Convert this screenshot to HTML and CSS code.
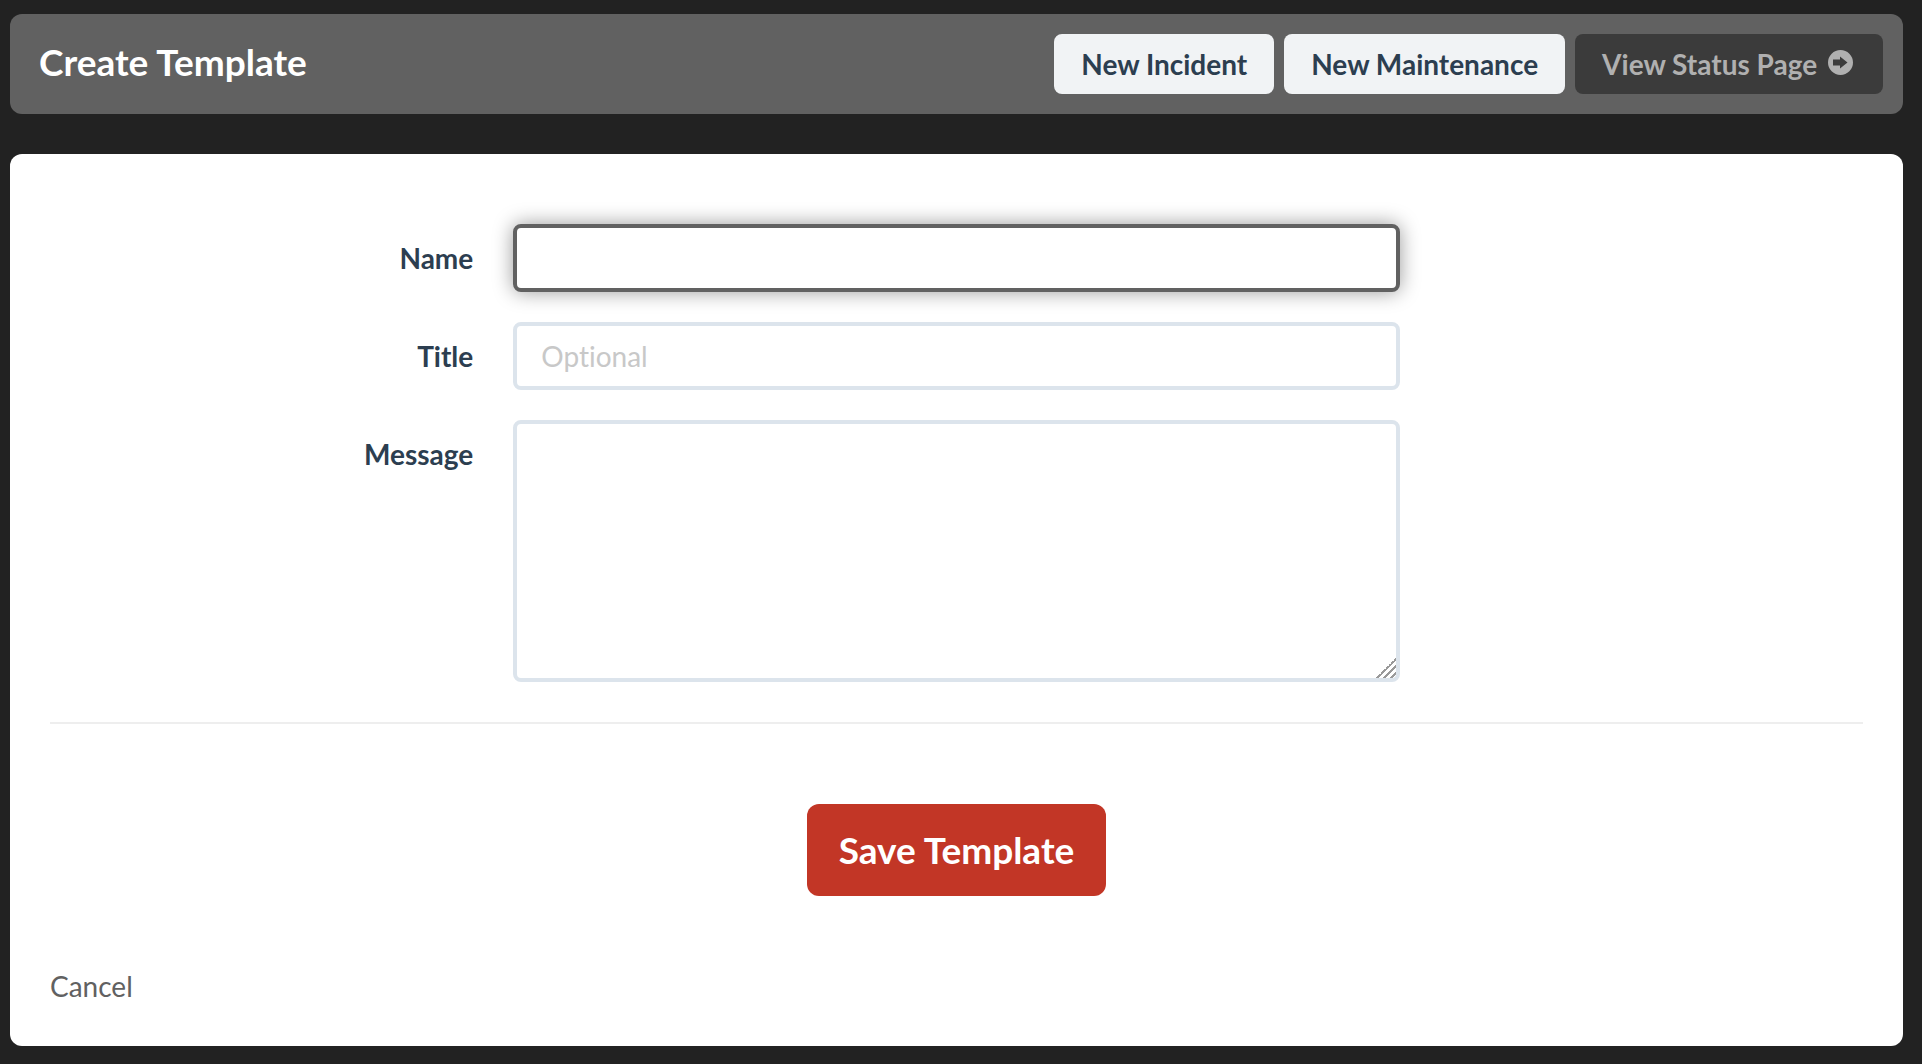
FILE: index.html
```html
<!DOCTYPE html>
<html lang="en">
<head>
  <meta charset="UTF-8">
  <title>Create Template</title>
  <link rel="stylesheet" href="styles.css">
</head>
<body>

  <header class="topbar">
    <h1>Create Template</h1>
    <nav class="actions">
      <a href="#" class="btn">New Incident</a>
      <a href="#" class="btn">New Maintenance</a>
      <a href="#" class="btn btn-dark">View Status Page
        <svg class="icon" viewBox="0 0 25 25" aria-hidden="true">
          <path fill="currentColor" fill-rule="evenodd" d="M12.500 0a12.500 12.500 0 1 1 0 25a12.500 12.500 0 1 1 0-25zM5 9.500v6h7v3l7.500-6L12 6.500v3z"/>
        </svg>
      </a>
    </nav>
  </header>

  <main class="panel">
    <form>
      <div class="form-row">
        <label for="name">Name</label>
        <input type="text" id="name" class="field" autofocus>
      </div>
      <div class="form-row">
        <label for="title">Title</label>
        <input type="text" id="title" class="field" placeholder="Optional">
      </div>
      <div class="form-row">
        <label for="message">Message</label>
        <textarea id="message" class="field"></textarea>
      </div>
      <hr>
      <div class="submit">
        <button type="submit" class="btn-save">Save Template</button>
      </div>
      <a href="#" class="cancel">Cancel</a>
    </form>
  </main>

</body>
</html>
```

FILE: styles.css
```css
* {
  box-sizing: border-box;
}
body {
  margin: 0;
  padding: 14px 19px 18px 10px;
  font-family: Lato, sans-serif;
  font-size: 28px;
  line-height: 40px;
  font-variant-ligatures: none;
  color: #2c3e50;
  background: #222;
}
a {
  text-decoration: none;
}
.topbar {
  display: flex;
  align-items: center;
  justify-content: space-between;
  padding: 20px 20px 20px 29px;
  margin-bottom: 40px;
  background: #616161;
  border-radius: 12px;
}
h1 {
  margin: 0;
  padding-bottom: 4px;
  font-size: 37px;
  font-weight: bold;
  color: #fff;
}
.actions {
  display: flex;
  gap: 10px;
}
.btn {
  padding: 10px 27px;
  font-weight: bold;
  color: #2c3e50;
  background: #f1f3f5;
  border-radius: 8px;
}
.btn-dark {
  padding-right: 30px;
  color: #b0b0b0;
  background: #3b3b3b;
}
.icon {
  width: 25px;
  height: 25px;
  margin-left: 4px;
}
.panel {
  padding: 70px 20px 40px;
  background: #fff;
  border-radius: 12px;
}
.form-row {
  display: grid;
  grid-template-columns: 1fr 2fr 1fr;
  margin-bottom: 30px;
}
.form-row label {
  padding: 14px 20px;
  font-weight: bold;
  text-align: right;
}
.field {
  display: block;
  height: 68px;
  margin: 0 20px;
  padding: 10px 24px;
  font: inherit;
  color: inherit;
  background: #fff;
  border: 4px solid #dce4ec;
  border-radius: 8px;
  outline: none;
}
.field::placeholder {
  color: #c8c8c8;
}
.field:focus {
  border-color: #616161;
  box-shadow: 0 0 20px rgba(0, 0, 0, 0.4);
}
textarea.field {
  height: 262px;
  resize: vertical;
  /* diagonal lines of the resize grip */
  background: linear-gradient(135deg, transparent 50%, #999 50% 57%, transparent 57% 67%, #999 67% 74%, transparent 74% 84%, #999 84% 91%, transparent 91%) right bottom / 20px 20px no-repeat #fff;
}
textarea::-webkit-resizer {
  background: transparent;
}
hr {
  height: 2px;
  margin: 40px 20px 80px;
  background: #eee;
  border: 0;
}
.submit {
  display: flex;
  justify-content: center;
  margin-bottom: 70px;
}
.btn-save {
  padding: 26px 32px;
  font: bold 37px/40px Lato, sans-serif;
  color: #fff;
  background: #c23626;
  border: 0;
  border-radius: 12px;
}
.cancel {
  margin-left: 20px;
  color: #616161;
}
```
